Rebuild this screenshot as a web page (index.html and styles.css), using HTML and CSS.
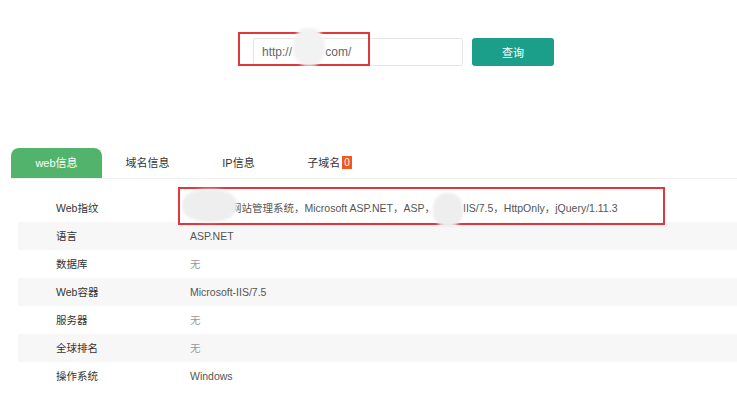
FILE: index.html
```html
<!DOCTYPE html>
<html lang="zh-CN">
<head>
    <meta charset="UTF-8">
    <meta name="viewport" content="width=device-width, initial-scale=1.0">
    <title>网站信息查询</title>
    <link rel="stylesheet" href="styles.css">
</head>
<body>

    <div class="search">
        <div class="search-box">
            <input type="text" class="url-input" value="http://          com/">
            <span class="mark mark-url"></span>
            <span class="blur blur-url"></span>
        </div>
        <button class="search-btn">查询</button>
    </div>

    <ul class="tabs">
        <li class="tab active">web信息</li>
        <li class="tab">域名信息</li>
        <li class="tab">IP信息</li>
        <li class="tab">子域名<span class="badge">0</span></li>
    </ul>

    <div class="info">
        <div class="row">
            <div class="label">Web指纹</div>
            <div class="value">
                <span class="gap-a"></span>网站管理系统，Microsoft ASP.NET，ASP，<span class="gap-b"></span>IIS/7.5，HttpOnly，jQuery/1.11.3
                <span class="mark mark-web"></span>
                <span class="blur blur-one"></span>
                <span class="blur blur-two"></span>
            </div>
        </div>
        <div class="row">
            <div class="label">语言</div>
            <div class="value">ASP.NET</div>
        </div>
        <div class="row">
            <div class="label">数据库</div>
            <div class="value none">无</div>
        </div>
        <div class="row">
            <div class="label">Web容器</div>
            <div class="value">Microsoft-IIS/7.5</div>
        </div>
        <div class="row">
            <div class="label">服务器</div>
            <div class="value none">无</div>
        </div>
        <div class="row">
            <div class="label">全球排名</div>
            <div class="value none">无</div>
        </div>
        <div class="row">
            <div class="label">操作系统</div>
            <div class="value">Windows</div>
        </div>
    </div>

</body>
</html>
```

FILE: styles.css
```css
body {
    margin: 0;
    font-family: "Liberation Sans", "Noto Sans CJK SC", sans-serif;
    font-size: 10.5px;
    color: #333;
    background-color: white;
    overflow: hidden;
}
.search {
    display: flex;
    gap: 9px;
    padding: 38px 0 0 253px;
}
.search-box {
    position: relative;
}
.url-input {
    box-sizing: border-box;
    width: 210px;
    height: 28px;
    padding: 0 8px;
    border: 1px solid #e6e6e6;
    border-radius: 2px;
    font-family: inherit;
    font-size: 12px;
    color: #666;
    white-space: pre;
}
.search-btn {
    width: 82px;
    height: 28px;
    background-color: #1b9f8b;
    color: white;
    border: none;
    border-radius: 3px;
    font-family: inherit;
    font-size: 11px;
    cursor: pointer;
}
.mark {
    position: absolute;
    border: 2px solid #e0363c;
    pointer-events: none;
}
.mark-url {
    left: -15px;
    top: -6px;
    width: 128px;
    height: 30px;
}
.blur {
    position: absolute;
    background-color: #eeeeee;
    border-radius: 45%;
    filter: blur(1.5px);
}
.blur-url {
    left: 40px;
    top: -10px;
    width: 32px;
    height: 38px;
    background-color: #f2f2f2;
}
.tabs {
    display: flex;
    list-style: none;
    margin: 82px 0 0 11px;
    padding: 0;
    border-bottom: 1px solid #eef2ef;
    font-size: 11px;
}
.tab {
    width: 91px;
    height: 30px;
    line-height: 30px;
    text-align: center;
    color: #333;
}
.tab.active {
    background-color: #52b36d;
    color: white;
    border-radius: 8px 8px 0 0;
}
.badge {
    display: inline-block;
    margin-left: 2px;
    padding: 0 2px;
    height: 13px;
    line-height: 13px;
    background-color: #f0581e;
    color: white;
    font-size: 10px;
    vertical-align: 1px;
}
.info {
    margin: 15px 0 0 18px;
}
.row {
    display: flex;
    height: 28px;
    line-height: 28px;
}
.row:nth-child(even) {
    background-color: #f7f7f7;
}
.label {
    width: 134px;
    padding-left: 38px;
    color: #333;
}
.value {
    position: relative;
    color: #555;
    white-space: nowrap;
}
.value.none {
    color: #999;
}
.gap-a {
    display: inline-block;
    width: 41px;
}
.gap-b {
    display: inline-block;
    width: 28px;
}
.mark-web {
    left: -12px;
    top: -7px;
    width: 483px;
    height: 34px;
}
.blur-one {
    left: -8px;
    top: -5px;
    width: 55px;
    height: 33px;
}
.blur-two {
    left: 243px;
    top: -1px;
    width: 30px;
    height: 34px;
}
```
